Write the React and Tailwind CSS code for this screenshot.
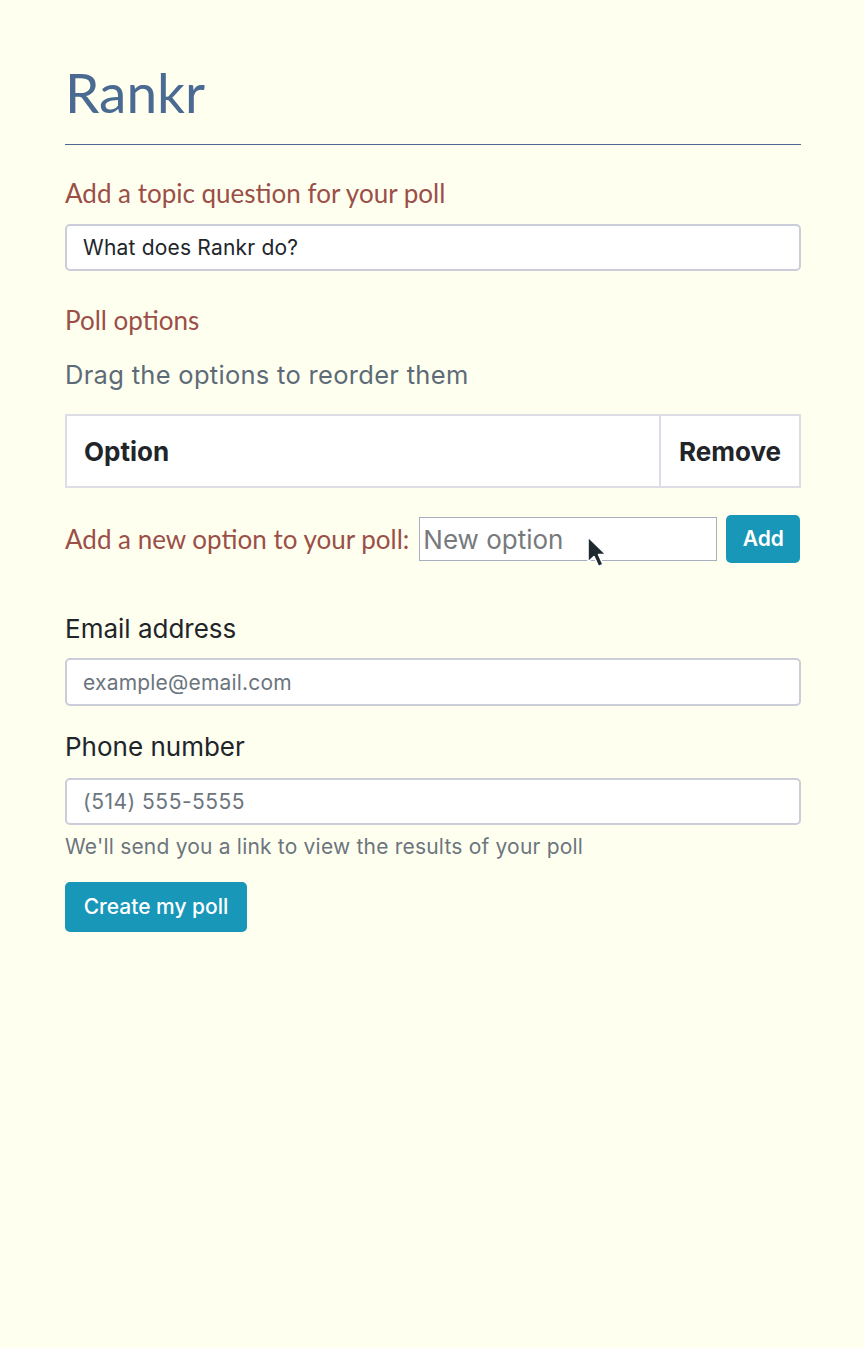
import React from "react";

const Cursor = () => (
  <svg width="24" height="36" viewBox="0 0 24 36" className="absolute left-[167px] top-[18px] pointer-events-none">
    <path d="M2 2 L2 27 L8 21.5 L12.5 31.5 L17 29.5 L12.5 19.5 L20 19.5 Z" fill="#1f2a30" stroke="#ffffff" strokeWidth="1.6" strokeLinejoin="round" />
  </svg>
);

const App = () => {
  return (
    <div className="min-h-[1348px] w-full bg-[#fffff0] font-['Inter','Noto_Sans',sans-serif] text-[#212529]">
      <div className="pl-[65px] pr-[63px] pt-[52px]">
        <h1 className="text-[55px] leading-[80px] text-[#4a6a92] font-['Lato',sans-serif]">Rankr</h1>
        <hr className="mt-[12px] border-0 border-t border-[#4a6a92]" />

        <h2 className="mt-[30px] text-[26px] leading-[36px] text-[#9b4f47] font-['Lato',sans-serif]">
          Add a topic question for your poll
        </h2>
        <input
          type="text"
          defaultValue="What does Rankr do?"
          className="mt-[13px] block w-full h-[47px] rounded-[5px] border-2 border-[#cbcdd9] bg-white px-[16px] text-[21px] tracking-[0.2px] text-[#212529] outline-none"
        />

        <h2 className="mt-[31px] text-[26px] leading-[36px] text-[#9b4f47] font-['Lato',sans-serif]">Poll options</h2>
        <p className="mt-[19px] text-[25.5px] leading-[36px] tracking-[0.3px] text-[#5d6b77]">Drag the options to reorder them</p>

        <table className="mt-[21px] w-full border-collapse bg-white">
          <thead>
            <tr>
              <th className="h-[72px] border-2 border-[#dddde6] px-[17px] text-left text-[26px] font-bold text-[#212529]">Option</th>
              <th className="h-[72px] w-[140px] border-2 border-[#dddde6] px-[18px] text-right text-[26px] font-bold text-[#212529]">Remove</th>
            </tr>
          </thead>
        </table>

        <div className="mt-[27px] flex items-center">
          <span className="text-[26px] leading-[36px] text-[#9b4f47] font-['Lato',sans-serif]">Add a new option to your poll:</span>
          <div className="relative ml-[10px]">
            <input
              type="text"
              placeholder="New option"
              className="block w-[298px] h-[44px] border border-[#a9b0bd] bg-white px-[3px] text-[26px] text-[#212529] placeholder:text-[#777a7c] outline-none"
            />
            <Cursor />
          </div>
          <button className="ml-[9px] h-[48px] w-[74px] rounded-[5px] bg-[#1897b8] text-[21px] font-semibold text-white">Add</button>
        </div>

        <label className="mt-[48px] block text-[26px] leading-[36px] text-[#212529]">Email address</label>
        <input
          type="email"
          placeholder="example@email.com"
          className="mt-[11px] block w-full h-[48px] rounded-[5px] border-2 border-[#cbcdd9] bg-white px-[16px] text-[21px] tracking-[0.2px] placeholder:text-[#6c757d] outline-none"
        />

        <label className="mt-[23px] block text-[26px] leading-[36px] text-[#212529]">Phone number</label>
        <input
          type="tel"
          placeholder="(514) 555-5555"
          className="mt-[13px] block w-full h-[47px] rounded-[5px] border-2 border-[#cbcdd9] bg-white px-[16px] text-[21px] tracking-[0.5px] placeholder:text-[#6c757d] outline-none"
        />
        <p className="mt-[8px] text-[21px] leading-[28px] tracking-[0.2px] text-[#6c757d]">We'll send you a link to view the results of your poll</p>

        <button className="mt-[21px] h-[50px] w-[182px] rounded-[5px] bg-[#1897b8] text-[21px] font-medium text-white">
          Create my poll
        </button>
      </div>
    </div>
  );
};

export default App;
